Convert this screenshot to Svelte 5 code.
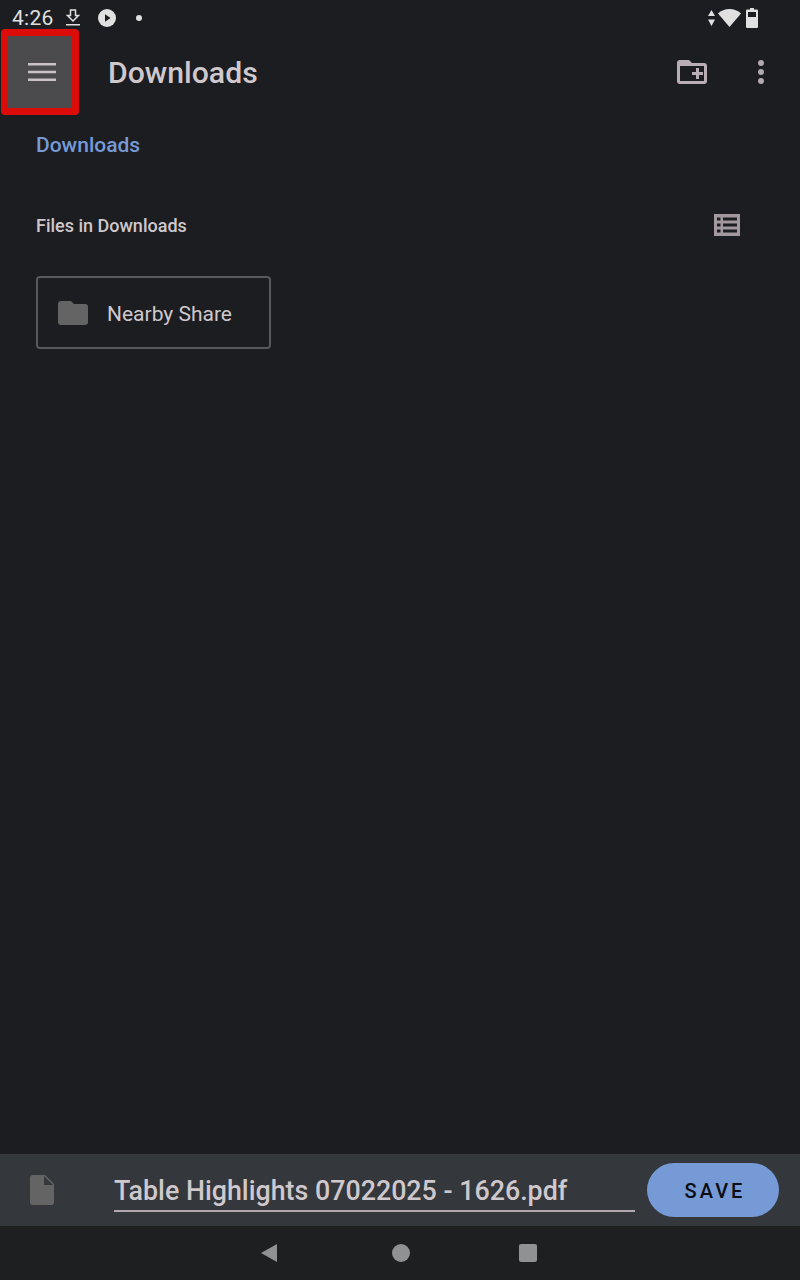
<script>
  const title = 'Downloads';
  const fileName = 'Table Highlights 07022025 - 1626.pdf';
</script>

<div class="screen">
  <div class="status">
    <span class="time">4:26</span>
    <svg class="st-download" width="16" height="18" viewBox="0 0 16 18">
      <path d="M5.5 1h5v5.5h3L8 12 2.500 6.500h3z" fill="none" stroke="#e0e0e0" stroke-width="1.500" />
      <rect x="1" y="15" width="14" height="1.500" fill="#e0e0e0" />
    </svg>
    <svg class="st-play" width="18" height="18" viewBox="0 0 18 18">
      <circle cx="9" cy="9" r="9" fill="#e0e0e0" />
      <path d="M7 5.200v7.600L12.500 9z" fill="#1c1d21" />
    </svg>
    <span class="st-dot"></span>
    <span class="spacer"></span>
    <svg class="st-arrows" width="7" height="18" viewBox="0 0 7 18">
      <path d="M3.500 1L7 7H0zM3.500 17L0 10.500h7z" fill="#e0e0e0" />
    </svg>
    <svg class="st-wifi" width="23" height="20" viewBox="0 0 23 20">
      <path d="M0 5.500C3 2.500 7 1 11.500 1S20 2.500 23 5.500L11.500 19z" fill="#e0e0e0" />
    </svg>
    <svg class="st-battery" width="12" height="20" viewBox="0 0 12 20">
      <path d="M4 0h4v1.500h3a1 1 0 0 1 1 1V19a1 1 0 0 1-1 1H1a1 1 0 0 1-1-1V2.500a1 1 0 0 1 1-1h3z" fill="#e0e0e0" />
      <rect x="2" y="4" width="8" height="5" fill="#1c1d21" />
    </svg>
  </div>

  <header class="toolbar">
    <button class="menu" aria-label="Menu">
      <svg width="28" height="20" viewBox="0 0 28 20">
        <path d="M0 1h28v2.500H0zM0 8.800h28v2.500H0zM0 16.500h28V19H0z" fill="#cbc3c7" />
      </svg>
    </button>
    <h1>{title}</h1>
    <span class="spacer"></span>
    <svg class="new-folder" width="30" height="24" viewBox="0 0 30 24">
      <path fill-rule="evenodd" d="M3 0h9l3 3h12a3 3 0 0 1 3 3v15a3 3 0 0 1-3 3H3a3 3 0 0 1-3-3V3a3 3 0 0 1 3-3zM3 6v15h24V6z" fill="#b9aeb4" />
      <path d="M15 12h4V8h3v4h4v3h-4v4h-3v-4h-4z" fill="#b9aeb4" />
    </svg>
    <svg class="more" width="8" height="24" viewBox="0 0 8 24">
      <circle cx="4" cy="3" r="3" fill="#b3a8ae" />
      <circle cx="4" cy="12" r="3" fill="#b3a8ae" />
      <circle cx="4" cy="21" r="3" fill="#b3a8ae" />
    </svg>
  </header>

  <nav class="crumb">{title}</nav>

  <div class="section">
    <span>Files in {title}</span>
    <svg width="26" height="22" viewBox="0 0 26 22">
      <rect width="26" height="22" fill="#a3989e" />
      <path d="M3 3.500h3.500v3H3zM9 3.500h14v3H9zM3 9.500h3.500v3H3zM9 9.500h14v3H9zM3 15.500h3.500v3H3zM9 15.500h14v3H9z" fill="#1c1d21" />
    </svg>
  </div>

  <div class="grid">
    <div class="folder-card">
      <svg width="30" height="24" viewBox="0 0 30 24">
        <path d="M3 0h10l3 3h11a3 3 0 0 1 3 3v15a3 3 0 0 1-3 3H3a3 3 0 0 1-3-3V3a3 3 0 0 1 3-3z" fill="#646464" />
      </svg>
      <span>Nearby Share</span>
    </div>
  </div>

  <div class="grow"></div>

  <div class="save-bar">
    <svg class="doc" width="24" height="30" viewBox="0 0 24 30">
      <path d="M3 0h12l9 9v18a3 3 0 0 1-3 3H3a3 3 0 0 1-3-3V3a3 3 0 0 1 3-3z" fill="#646464" />
      <path d="M14 1v9h9z" fill="#34373b" />
    </svg>
    <div class="name">{fileName}</div>
    <button class="save">SAVE</button>
  </div>

  <div class="navbar">
    <svg width="16" height="18" viewBox="0 0 16 18"><path d="M16 0v18L0 9z" fill="#8f9193" /></svg>
    <span class="circle"></span>
    <span class="square"></span>
  </div>
</div>

<style>
  :global(body) {
    background: #1c1d21;
  }
  .screen {
    width: 800px;
    height: 1280px;
    display: flex;
    flex-direction: column;
    background: #1c1d21;
    font-family: Roboto, sans-serif;
    color: #cfc8cc;
    overflow: hidden;
  }
  .status {
    height: 36px;
    display: flex;
    align-items: center;
    padding: 0 42px 0 12px;
    color: #e0e0e0;
    flex: none;
  }
  .time {
    font-size: 21px;
    letter-spacing: 0.3px;
  }
  .st-download {
    margin-left: 11px;
  }
  .st-play {
    margin-left: 17px;
  }
  .st-dot {
    width: 6px;
    height: 6px;
    border-radius: 50%;
    background: #e0e0e0;
    margin-left: 20px;
  }
  .spacer {
    flex: 1;
  }
  .st-wifi {
    margin-left: 3px;
  }
  .st-battery {
    margin-left: 5px;
  }
  .toolbar {
    height: 72px;
    display: flex;
    align-items: center;
    flex: none;
    padding-right: 35px;
  }
  .menu {
    width: 78px;
    height: 86px;
    margin: 0 0 0 1px;
    border: 7px solid #dc0c08;
    border-radius: 4px;
    background: #4b4b4d;
    padding: 0 0 0 3px;
    display: flex;
    align-items: center;
    justify-content: center;
    box-sizing: border-box;
    flex: none;
  }
  h1 {
    margin: 0 0 0 29px;
    font-size: 30.200px;
    font-weight: 500;
    color: #cfc8cc;
  }
  .more {
    margin-left: 50px;
  }
  .crumb {
    margin: 23px 0 0 36px;
    font-size: 21px;
    font-weight: 500;
    line-height: 28px;
    color: #769ad6;
    flex: none;
  }
  .section {
    display: flex;
    justify-content: space-between;
    align-items: center;
    margin: 54px 60px 0 36px;
    font-size: 18px;
    font-weight: 500;
    height: 24px;
    flex: none;
  }
  .grid {
    margin: 39px 0 0 36px;
    flex: none;
  }
  .folder-card {
    width: 235px;
    height: 73px;
    box-sizing: border-box;
    border: 2px solid #58595c;
    border-radius: 4px;
    display: flex;
    align-items: center;
    padding-left: 20px;
    gap: 19px;
    font-size: 21px;
  }
  .folder-card span {
    padding-top: 2px;
  }
  .grow {
    flex: 1;
  }
  .save-bar {
    height: 72px;
    flex: none;
    background: #34373b;
    display: flex;
    align-items: center;
    padding-left: 30px;
  }
  .name {
    margin: 2px 12px 0 60px;
    width: 521px;
    box-sizing: border-box;
    font-size: 26.800px;
    font-weight: 500;
    height: 42px;
    line-height: 42px;
    border-bottom: 2px solid #b3a8ae;
    white-space: nowrap;
  }
  .save {
    width: 132px;
    height: 54px;
    border: 0;
    border-radius: 27px;
    background: #769ad6;
    color: #0c0d12;
    font-family: Roboto, sans-serif;
    font-size: 20px;
    font-weight: 500;
    letter-spacing: 3px;
    padding: 1px 0 0 4px;
  }
  .navbar {
    height: 54px;
    flex: none;
    background: #1e1f21;
    display: flex;
    align-items: center;
    padding-left: 261px;
  }
  .circle {
    width: 18px;
    height: 18px;
    border-radius: 50%;
    background: #8f9193;
    margin-left: 115px;
  }
  .square {
    width: 18px;
    height: 18px;
    border-radius: 2px;
    background: #8f9193;
    margin-left: 109px;
  }
</style>
